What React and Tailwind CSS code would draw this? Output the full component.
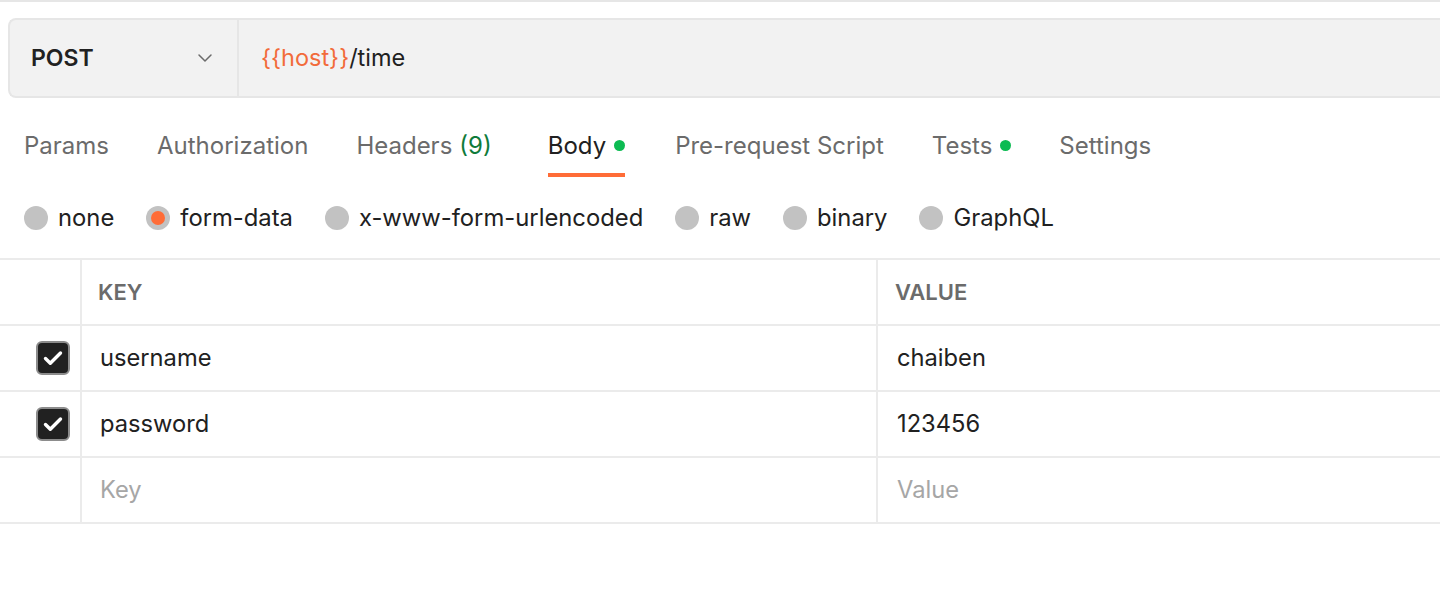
import React from "react";
import { ChevronDown } from "lucide-react";

const tabs = [
  { label: "Params" },
  { label: "Authorization" },
  { label: "Headers", count: "(9)" },
  { label: "Body", dot: true, active: true },
  { label: "Pre-request Script" },
  { label: "Tests", dot: true },
  { label: "Settings" },
];

const bodyTypes = ["none", "form-data", "x-www-form-urlencoded", "raw", "binary", "GraphQL"];

const rows = [
  { key: "username", value: "chaiben", checked: true },
  { key: "password", value: "123456", checked: true },
];

function Checkbox() {
  return (
    <div className="w-[34px] h-[34px] rounded-[6px] bg-[#212121] border-2 border-[#8c8c8c] grid place-items-center">
      <svg width="24" height="24" viewBox="0 0 24 24" fill="none">
        <path d="M4.5 12.5l4.8 4.8L19.5 7" stroke="white" strokeWidth="3.4" strokeLinecap="round" strokeLinejoin="round" />
      </svg>
    </div>
  );
}

export default function App() {
  return (
    <div className="w-[1440px] h-[594px] bg-white overflow-hidden font-['Inter',sans-serif] text-[#212121]">
      <div className="h-[2px] bg-[#e6e6e6]" />

      {/* request line */}
      <div className="pl-[8px] pt-[16px]">
        <div className="flex h-[80px] rounded-l-[8px] border-2 border-r-0 border-[#e6e6e6] bg-[#f2f2f2]">
          <div className="w-[229px] flex items-center justify-between pl-[21px] pr-[20px] border-r-2 border-[#e6e6e6]">
            <span className="text-[23px] font-semibold">POST</span>
            <ChevronDown size={24} strokeWidth={1.5} className="text-[#6b6b6b]" />
          </div>
          <div className="flex items-center pl-[22px] text-[23.5px]">
            <span className="text-[#f26b3a]">{"{{host}}"}</span>
            <span>/time</span>
          </div>
        </div>
      </div>

      {/* tabs */}
      <div className="flex gap-[48px] pl-[24px] mt-[33px] h-[46px]">
        {tabs.map((t) => (
          <div
            key={t.label}
            className={`flex items-start h-full text-[24px] ${t.active ? "text-[#212121] border-b-4 border-[#ff6c37] ml-[8px] mr-[2px]" : "text-[#6b6b6b]"}`}
          >
            <div className="flex items-center gap-[8px] h-[29px]">
              <span>{t.label}</span>
              {t.count && <span className="text-[#0f7b3b] -ml-[1px]">{t.count}</span>}
              {t.dot && <span className="w-[11px] h-[11px] rounded-full bg-[#0cbb52]" />}
            </div>
          </div>
        ))}
      </div>

      {/* body type radios */}
      <div className="flex items-center pl-[24px] h-[81px]">
        {bodyTypes.map((b) => (
          <div key={b} className="flex items-center gap-[10px] mr-[32px]">
            <span className="w-[24px] h-[24px] rounded-full bg-[#c2c2c2] grid place-items-center">
              {b === "form-data" && <span className="w-[14px] h-[14px] rounded-full bg-[#ff6c37]" />}
            </span>
            <span className="text-[23.8px] text-[#212121]">{b}</span>
          </div>
        ))}
      </div>

      {/* table */}
      <div className="border-t-2 border-[#ebebeb]">
        <div className="flex h-[66px] border-b-2 border-[#ebebeb]">
          <div className="w-[82px] border-r-2 border-[#ebebeb]" />
          <div className="w-[796px] border-r-2 border-[#ebebeb] flex items-center pl-[16px] text-[22px] font-semibold text-[#6b6b6b]">KEY</div>
          <div className="flex-1 flex items-center pl-[17px] text-[22px] font-semibold text-[#6b6b6b]">VALUE</div>
        </div>
        {rows.map((r) => (
          <div key={r.key} className="flex h-[66px] border-b-2 border-[#ebebeb]">
            <div className="w-[82px] border-r-2 border-[#ebebeb] flex items-center justify-end pr-[10px]">
              {r.checked && <Checkbox />}
            </div>
            <div className="w-[796px] border-r-2 border-[#ebebeb] flex items-center pl-[18px] text-[23.7px]">{r.key}</div>
            <div className="flex-1 flex items-center pl-[19px] text-[23.7px]">{r.value}</div>
          </div>
        ))}
        <div className="flex h-[66px] border-b-2 border-[#ebebeb]">
          <div className="w-[82px] border-r-2 border-[#ebebeb]" />
          <div className="w-[796px] border-r-2 border-[#ebebeb] flex items-center pl-[18px] text-[23.7px] text-[#a6a6a6]">Key</div>
          <div className="flex-1 flex items-center pl-[19px] text-[23.7px] text-[#a6a6a6]">Value</div>
        </div>
      </div>
    </div>
  );
}
